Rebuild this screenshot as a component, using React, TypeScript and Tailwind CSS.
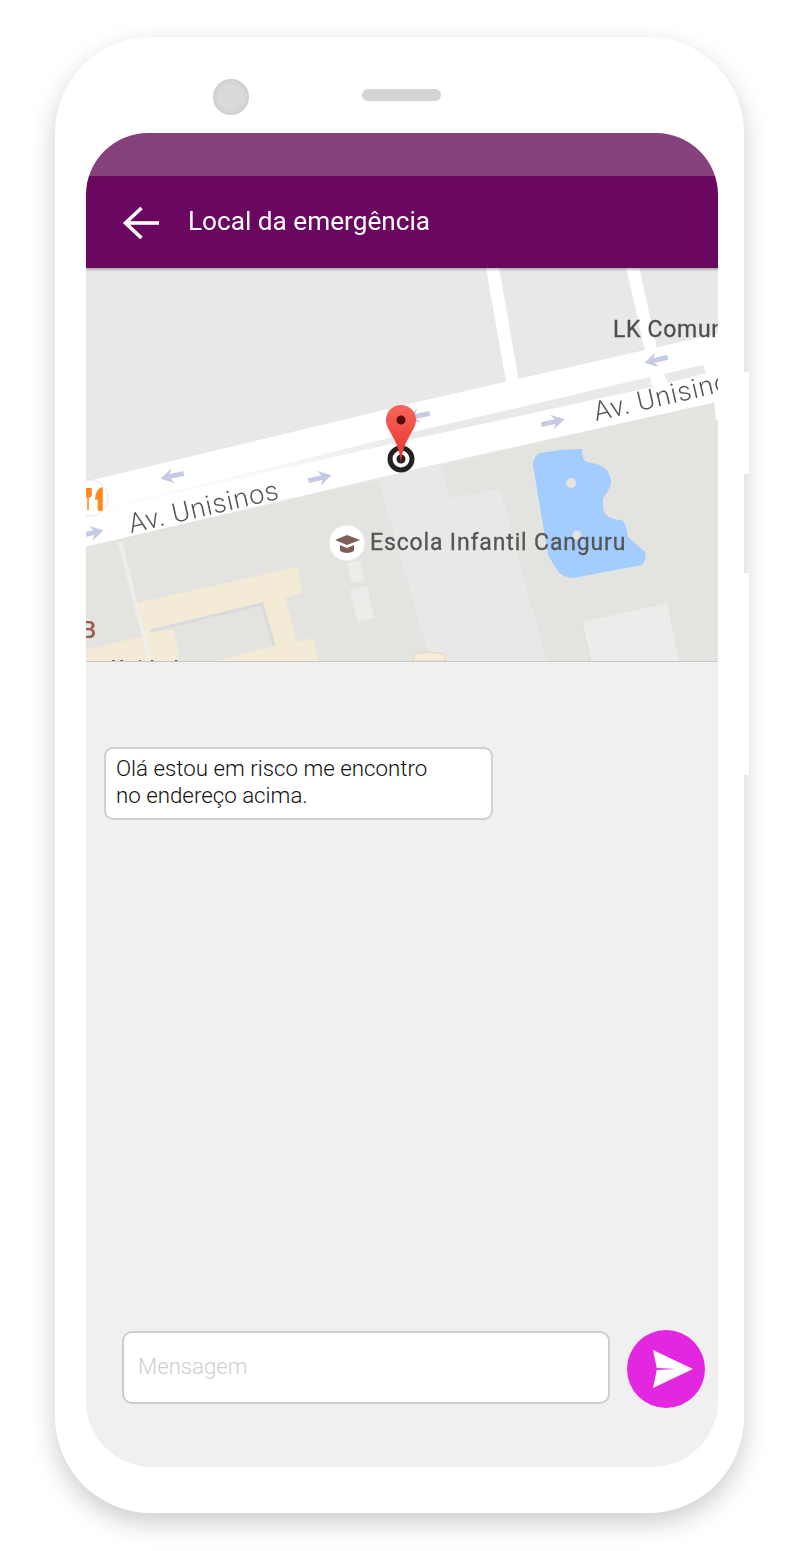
const Arrow = ({ x, y, dir }: { x: number; y: number; dir: "l" | "r" }) => (
  <g transform={`translate(${x} ${y}) rotate(${dir === "r" ? -13 : 167})`} fill="#c6cae2">
    <path d="M-12 -2.4 L2 -2.4 L-1 -7.5 L12 0 L-1 7.5 L2 2.4 L-12 2.4 Z" />
  </g>
);

function MapView() {
  return (
    <svg viewBox="86 268 632 393" width="632" height="393" className="block" fontFamily="Roboto, sans-serif">
      <defs>
        <linearGradient id="pin" x1="0" y1="0" x2="0" y2="1">
          <stop offset="0" stopColor="#f8655c" />
          <stop offset="1" stopColor="#e8302a" />
        </linearGradient>
        <linearGradient id="median" gradientUnits="userSpaceOnUse" x1="110" y1="0" x2="420" y2="0">
          <stop offset="0" stopColor="#fcfcfc" />
          <stop offset="0.55" stopColor="#f7f7f7" />
          <stop offset="1" stopColor="#e9e9e9" />
        </linearGradient>
        <filter id="soft" x="-5%" y="-5%" width="110%" height="110%">
          <feGaussianBlur stdDeviation="0.7" />
        </filter>
      </defs>
      <g filter="url(#soft)">
        <rect x="80" y="262" width="645" height="405" fill="#e8e8e8" />
        {/* lower ground */}
        <path d="M80 548 L725 400 L725 667 L80 667 Z" fill="#e3e4df" />
        <path d="M378 478 L440 465 L450 498 L500 489 L548 667 L432 667 Z" fill="#e8e8e8" />
        <path d="M582 622 L667 603 L680 667 L592 667 Z" fill="#ececea" />
        <path d="M582 622 L592 667" stroke="#dcdcd8" strokeWidth="1" />
        {/* side roads */}
        <path d="M485 262 L498 262 L519 382 L506 382 Z" fill="#fff" />
        <path d="M625 262 L638 262 L666 390 L654 390 Z" fill="#fff" />
        <path d="M712 380 L725 380 L725 420 L716 420 Z" fill="#fff" />
        {/* avenue */}
        <path d="M80 483 L417 402 L645 350 L725 332 L725 400 L433 465 L80 548 Z" fill="#fff" />
        <path d="M112 506 L413 432 L650 377 L652 387 L413 439 L112 508 Z" fill="url(#median)" />
        <path d="M664 374 L703 365 L706 373 L668 383 Z" fill="#e8e8e8" />
        {/* beige building */}
        <path d="M137 603 L297 567 L302 593 L285 598 L297 642 L313 638 L320 667 L80 667 L80 651 L143 636 Z" fill="#f3ebd6" />
        <path d="M150 631 L262 604 L275 646 L214 661 L214 667 L180 667 L173 630 Z" fill="#e3e4df" />
        <path d="M150 631 L262 604 L274 645" fill="none" stroke="#d8dadb" strokeWidth="3" />
        <path d="M86 650 L173 630 L179 654 L150 664 L86 664 Z" fill="#f3ebd6" />
        <path d="M120 542 L150 661" stroke="#eeeee9" strokeWidth="4" />
        {/* small blocks */}
        <path d="M347 563 L360 561 L364 581 L351 583 Z" fill="#ececea" />
        <path d="M350 590 L367 586 L374 618 L358 622 Z" fill="#ececea" />
        <path d="M415 654 L428 652 L444 654 L446 661 L413 661 Z" fill="#f6ecd9" stroke="#e8d6bc" strokeWidth="1" />
        {/* lake */}
        <path
          d="M533 465 Q534 455 540 453 L560 450 L582 449 Q582 459 586 462 L597 464 Q610 468 611 482 Q610 490 603 498 Q602 510 606 515 Q612 520 622 520 Q627 526 628 537 L645 552 Q647 560 642 565 L573 578 Q561 577 557 570 L548 555 Z"
          fill="#a3ccff"
        />
        <circle cx="571" cy="483" r="5" fill="#e3e4df" />
        <circle cx="577" cy="535" r="4.5" fill="#e3e4df" />
        {/* arrows */}
        <Arrow x={172} y={476} dir="l" />
        <Arrow x={656} y={360} dir="l" />
        <Arrow x={418} y={416} dir="l" />
        <Arrow x={320} y={478} dir="r" />
        <Arrow x={553} y={422} dir="r" />
        <Arrow x={92} y={533} dir="r" />
        {/* labels */}
        <text x="131" y="533" fontSize="27" fontWeight="300" fill="#555" letterSpacing="0.9" transform="rotate(-13 131 533)">Av. Unisinos</text>
        <text x="596" y="421" fontSize="27" fontWeight="300" fill="#555" letterSpacing="0.9" transform="rotate(-13 596 421)">Av. Unisinos</text>
        <text x="613" y="337" fontSize="23" fontWeight="400" fill="#4e4e4e" stroke="#4e4e4e" strokeWidth="0.3" letterSpacing="0.7">LK Comunicação</text>
        <text x="370" y="550" fontSize="23" fontWeight="400" fill="#555" stroke="#555" strokeWidth="0.3" letterSpacing="0.85">Escola Infantil Canguru</text>
        <text x="81" y="638" fontSize="24" fontWeight="500" fill="#9a5d50">B</text>
        <text x="111" y="674.5" fontSize="20" fontWeight="500" fill="#555" letterSpacing="1">Unidade</text>
        {/* restaurant poi */}
        <circle cx="90" cy="498" r="18" fill="#fff" stroke="#e6e6e6" />
        <path d="M88 488 V501 M85 488 V495 Q85 497 88 497 Q91 497 91 495 V488 M88 497 V510 M102 488 Q96 490 96 499 H98.5 V510 H102 V488 Z" fill="#ff8a1c" stroke="#ff8a1c" strokeWidth="1.6" />
        {/* school poi */}
        <circle cx="347" cy="543" r="18" fill="#fff" stroke="#e6e6e6" />
        <path d="M335 540 L347 535 L360 540 L347 545 Z" fill="#7d5f58" />
        <path d="M340 545 L347 548 L354 545 V551 Q347 555 340 551 Z" fill="#7d5f58" />
      </g>
      {/* target */}
      <circle cx="401" cy="459" r="11" fill="#fff" stroke="#222" strokeWidth="5" />
      <circle cx="401" cy="459" r="4.5" fill="#222" />
      {/* pin */}
      <path d="M401 405 C392 405 386 412 386 420 C386 431 399 439 401 463 C403 439 416 431 416 420 C416 412 410 405 401 405 Z" fill="url(#pin)" />
      <circle cx="401" cy="420" r="4.5" fill="#5b0b0b" />
    </svg>
  );
}

export default function App() {
  return (
    <div className="w-[800px] h-[1551px] bg-white pt-[37px] pl-[55px] font-['Roboto',sans-serif]">
      <div className="relative w-[689px] h-[1476px] bg-white rounded-[96px] shadow-[0_10px_26px_rgba(0,0,0,0.2)] px-[31px] flex flex-col">
        <div className="absolute left-full top-[335px] w-[5px] h-[102px] bg-white" />
        <div className="absolute left-full top-[536px] w-[5px] h-[202px] bg-white" />
        <div className="h-[96px] shrink-0 flex items-start">
          <div className="ml-[127px] mt-[42px] w-[36px] h-[36px] rounded-full bg-[#dadada] shadow-[inset_0_0_6px_rgba(0,0,0,0.12)]" />
          <div className="ml-[113px] mt-[52px] w-[79px] h-[12px] rounded-full bg-[#d4d4d4]" />
        </div>
        <div className="w-[632px] h-[1334px] bg-[#f0f0f0] rounded-t-[62px] rounded-b-[66px] overflow-hidden flex flex-col">
          <div className="h-[43px] shrink-0 bg-[#87407e]" />
          <div className="relative z-10 h-[92px] shrink-0 bg-[#6a0760] flex items-center shadow-[0_2px_2px_rgba(0,0,0,0.25)]">
            <svg width="38" height="34" viewBox="0 0 38 34" className="ml-[36px]" fill="none" stroke="#fff" strokeWidth="3.6">
              <path d="M37 18 H5" />
              <path d="M19.5 3 L3.5 18 L19.5 33" />
            </svg>
            <span className="ml-[28px] mb-[2px] text-[26.2px] leading-[32px] text-white">Local da emergência</span>
          </div>
          <div className="h-[394px] shrink-0 border-b border-[#c8c8c8]">
            <MapView />
          </div>
          <div className="flex-1 flex flex-col justify-between pl-[18px] pr-[13px] pt-[85px] pb-[59px]">
            <div className="w-[389px] h-[73px] bg-white border-2 border-[#d0d0d0] rounded-[9px] pl-[10px] pt-[6px] text-[22.3px] leading-[27px] font-light text-[#111]">
              Olá estou em risco me encontro
              <br />
              no endereço acima.
            </div>
            <div className="flex items-start ml-[18px]">
              <input
                readOnly
                placeholder="Mensagem"
                className="mt-[1px] w-[488px] h-[73px] bg-white border-2 border-[#cdcdcd] rounded-[10px] pl-[14px] pb-[4px] text-[22.2px] font-light outline-none placeholder:text-[#cfcfcf]"
              />
              <div className="ml-[17px] w-[78px] h-[78px] pl-[14px] rounded-full bg-[#e327e0] flex items-center justify-center">
                <svg width="40" height="38" viewBox="0 0 40 38" className="shrink-0">
                  <path d="M0 0 L40 19 L0 38 L4 19 Z" fill="#fff" />
                  <path d="M4 18 L23 19 L4 20 Z" fill="#e327e0" />
                </svg>
              </div>
            </div>
          </div>
        </div>
      </div>
    </div>
  );
}
